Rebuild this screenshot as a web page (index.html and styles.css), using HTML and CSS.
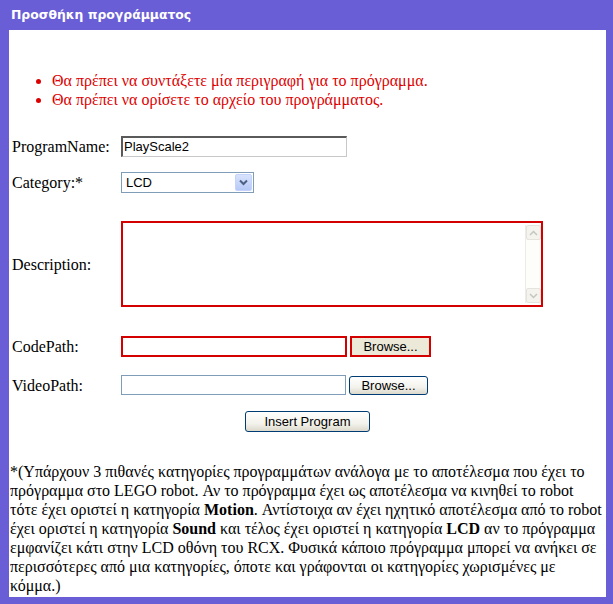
FILE: index.html
```html
<!DOCTYPE html>
<html lang="el">
<head>
<meta charset="utf-8">
<title>Προσθήκη προγράμματος</title>
<link rel="stylesheet" href="styles.css">
</head>
<body>
<div class="window">
  <div class="title">Προσθήκη προγράμματος</div>
  <div class="content">
    <ul class="errors">
      <li>Θα πρέπει να συντάξετε μία περιγραφή για το πρόγραμμα.</li>
      <li>Θα πρέπει να ορίσετε το αρχείο του προγράμματος.</li>
    </ul>
    <div class="form">
      <div class="row row-name">
        <span class="label">ProgramName:</span>
        <div class="input input-inset">PlayScale2</div>
      </div>
      <div class="row row-cat">
        <span class="label">Category:*</span>
        <div class="select">
          <span class="select-text">LCD</span>
          <span class="select-btn">
            <svg width="9" height="7" viewBox="0 0 9 7"><path d="M1 1.5 L4.5 5 L8 1.5" fill="none" stroke="#4d6185" stroke-width="2"/></svg>
          </span>
        </div>
      </div>
      <div class="row row-desc">
        <span class="label">Description:</span>
        <div class="textarea error">
          <div class="textarea-field"></div>
          <div class="scrollbar">
            <div class="sb-btn">
              <svg width="9" height="6" viewBox="0 0 9 6"><path d="M1 5 L4.5 1.5 L8 5" fill="none" stroke="#c4c6c0" stroke-width="1.5"/></svg>
            </div>
            <div class="sb-track"></div>
            <div class="sb-btn">
              <svg width="9" height="6" viewBox="0 0 9 6"><path d="M1 1 L4.5 4.5 L8 1" fill="none" stroke="#c4c6c0" stroke-width="1.5"/></svg>
            </div>
          </div>
        </div>
      </div>
      <div class="row row-code">
        <span class="label">CodePath:</span>
        <div class="input input-file error"></div>
        <div class="btn btn-browse-err">Browse...</div>
      </div>
      <div class="row row-video">
        <span class="label">VideoPath:</span>
        <div class="input input-file input-xp"></div>
        <div class="btn btn-xp btn-browse">Browse...</div>
      </div>
      <div class="row row-submit">
        <div class="btn btn-xp btn-insert">Insert Program</div>
      </div>
    </div>
    <p class="note">*(Υπάρχουν 3 πιθανές κατηγορίες προγραμμάτων ανάλογα με το αποτέλεσμα που έχει το<br>πρόγραμμα στο LEGO robot. Αν το πρόγραμμα έχει ως αποτέλεσμα να κινηθεί το robot<br>τότε έχει οριστεί η κατηγορία <b>Motion</b>. Αντίστοιχα αν έχει ηχητικό αποτέλεσμα από το robot<br>έχει οριστεί η κατηγορία <b>Sound</b> και τέλος έχει οριστεί η κατηγορία <b>LCD</b> αν το πρόγραμμα<br>εμφανίζει κάτι στην LCD οθόνη του RCX. Φυσικά κάποιο πρόγραμμα μπορεί να ανήκει σε<br>περισσότερες από μια κατηγορίες, όποτε και γράφονται οι κατηγορίες χωρισμένες με<br>κόμμα.)</p>
  </div>
</div>
</body>
</html>
```
FILE: styles.css
```css
* { box-sizing: border-box; }
html, body { margin: 0; padding: 0; }
body {
  font-family: "Liberation Serif", "Times New Roman", serif;
  font-size: 16px;
  color: #000;
  background: #fff;
}
.window {
  width: 613px;
  height: 604px;
  background: #6a5ed6;
  padding: 0 7px 7px 9px;
  display: flex;
  flex-direction: column;
}
.title {
  height: 30px;
  padding: 7px 0 0 2px;
  font-family: "DejaVu Sans", Verdana, sans-serif;
  font-weight: bold;
  font-size: 12.4px;
  line-height: 16px;
  color: #fff;
}
.content {
  flex: 1;
  background: #fff;
  overflow: hidden;
}
.errors {
  margin: 41px 0 0 0;
  padding-left: 43px;
  color: #dd0000;
  line-height: 19px;
}
.form {
  margin-top: 27px;
  padding-left: 3px;
}
.row {
  display: flex;
  align-items: center;
  margin-top: 15px;
}
.row-name { margin-top: 0; }
.row-desc { margin-top: 28px; }
.row-code { margin-top: 29px; }
.row-video { margin-top: 18px; }
.row-submit { margin-top: 16px; justify-content: center; margin-left: -3px; }
.label {
  width: 109px;
  flex: none;
  line-height: 19px;
}
.input {
  width: 226px;
  height: 21px;
  font-family: "Liberation Sans", Arial, sans-serif;
  font-size: 13px;
  line-height: 17px;
  background: #fff;
}
.input-inset {
  border-style: solid;
  border-width: 2px 1px 1px 2px;
  border-color: #5a5a5a #c8c8c8 #c8c8c8 #5a5a5a;
  padding-left: 1px;
}
.error {
  border: 2px solid #d40000;
}
.input-xp {
  width: 225px;
  height: 20px;
  border: 1px solid #7f9db9;
}
.select {
  width: 133px;
  height: 21px;
  border: 1px solid #7f9db9;
  display: flex;
  align-items: center;
  justify-content: space-between;
  padding: 1px;
  font-family: "Liberation Sans", Arial, sans-serif;
  font-size: 13px;
}
.select-text { padding-left: 3px; }
.select-btn {
  width: 17px;
  height: 17px;
  border: 1px solid #c3d3fd;
  border-radius: 2px;
  background: linear-gradient(#d8e3fc, #b6c9f6);
  display: flex;
  align-items: center;
  justify-content: center;
}
.textarea {
  width: 422px;
  height: 86px;
  display: flex;
  padding: 2px 0 2px 0;
  background: #fff;
}
.textarea-field { flex: 1; }
.scrollbar {
  width: 16px;
  display: flex;
  flex-direction: column;
  border-left: 1px solid #ecebe6;
  background: #fdfdfb;
}
.sb-btn {
  height: 15px;
  background: #f4f3ee;
  border: 1px solid #e4e3dc;
  border-radius: 2px;
  display: flex;
  align-items: center;
  justify-content: center;
}
.sb-track { flex: 1; }
.btn {
  font-family: "Liberation Sans", Arial, sans-serif;
  font-size: 13px;
  color: #000;
  display: flex;
  align-items: center;
  justify-content: center;
}
.btn-browse-err {
  margin-left: 3px;
  width: 81px;
  height: 21px;
  border: 2px solid #d40000;
  background: #ece9d8;
}
.btn-xp {
  border: 1px solid #003c74;
  border-radius: 3px;
  background: linear-gradient(#ffffff, #f3f2ec 60%, #dcd9cc);
}
.btn-browse {
  margin-left: 3px;
  width: 79px;
  height: 19px;
}
.btn-insert {
  width: 125px;
  height: 21px;
}
.note {
  margin: 30px 0 0 1px;
  line-height: 19px;
}
.note b { font-weight: bold; }
```
